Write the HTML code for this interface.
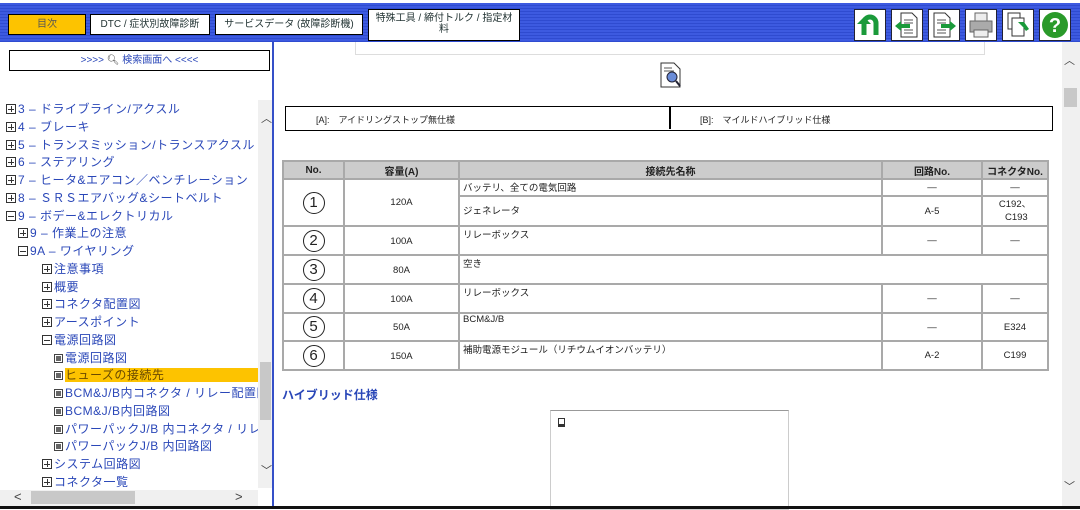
<!DOCTYPE html>
<html><head><meta charset="utf-8"><style>
*{margin:0;padding:0;box-sizing:border-box}
body{width:1080px;height:509px;overflow:hidden;background:#fff;font-family:"Liberation Sans","Noto Sans CJK JP",sans-serif;position:relative}
.abs{position:absolute}
#top{left:0;top:0;width:1080px;height:42px;background:repeating-linear-gradient(#3d5ae0 0 2px,#2f4bd0 2px 3px);border-top:3px solid #fff}
.btn{position:absolute;top:11px;height:21px;background:#fff;border:1px solid #000;font-size:10px;text-align:center;line-height:19px;color:#233}
.ib{position:absolute;top:6px;width:32px;height:32px;background:#fff;border:1px solid #223}
.treewrap{position:absolute;left:0;top:95px;width:258px;height:395px;overflow:hidden}
.tree div{position:absolute;font-size:12px;color:#2a47b8;white-space:nowrap;letter-spacing:0.5px}
.tree .b{display:inline-block;width:10px;height:10px;border:1px solid #333;margin-right:2px;vertical-align:-1px;position:relative}
.tree .p::before{content:"";position:absolute;left:1px;right:1px;top:3.5px;height:1px;background:#333}
.tree .p::after{content:"";position:absolute;top:1px;bottom:1px;left:3.5px;width:1px;background:#333}
.tree .m::before{content:"";position:absolute;left:1px;right:1px;top:3.5px;height:1px;background:#333}
.tree .d{display:inline-block;width:9px;height:9px;border:1px solid #444;background:#fff;margin-right:2px;vertical-align:-1px;position:relative}
.tree .d::before{content:"";position:absolute;left:1px;top:1px;width:5px;height:5px;background:#666}
table{border-collapse:collapse;position:absolute;left:282px;top:160px;width:767px;font-size:9.5px;color:#222}
td,th{border:2px solid #a9a9a9;text-align:center}
th{background:#ccc;height:18px;font-size:10px}
td.l{text-align:left;vertical-align:top;padding-left:3px}
td.v{padding-top:1px}
.c{display:inline-block;width:22px;height:22px;border:1.5px solid #222;border-radius:50%;font-size:15px;line-height:19px;text-align:center}
</style></head><body>
<div id="top" class="abs">
<div class="btn" style="left:8px;width:78px;background:#fdc300;color:#555">目次</div>
<div class="btn" style="left:90px;width:120px">DTC / 症状別故障診断</div>
<div class="btn" style="left:215px;width:148px">サービスデータ (故障診断機)</div>
<div class="btn" style="left:368px;width:152px;top:6px;height:32px;line-height:11px;padding-top:3px">特殊工具 / 締付トルク / 指定材<br>料</div>
<div class="ib" style="left:854px"><svg width="30" height="30"><path d="M9 25V13a6 6 0 0 1 12 0v12" fill="none" stroke="#1a9a3a" stroke-width="5"/><path d="M2 14l7-7 7 7z" fill="#1a9a3a"/></svg></div>
<div class="ib" style="left:891px"><svg width="30" height="30"><path d="M9 3h11l5 5v19H9z" fill="#fff" stroke="#333"/><path d="M12 10h9M12 13h9M12 20h9M12 23h9" stroke="#555"/><path d="M3 16l6-5v3h9v4H9v3z" fill="#1a9a3a"/></svg></div>
<div class="ib" style="left:928px"><svg width="30" height="30"><path d="M5 3h11l5 5v19H5z" fill="#fff" stroke="#333"/><path d="M8 10h9M8 13h9M8 20h9M8 23h9" stroke="#555"/><path d="M27 16l-6-5v3h-9v4h9v3z" fill="#1a9a3a"/></svg></div>
<div class="ib" style="left:965px"><svg width="30" height="30"><rect x="9" y="3" width="12" height="9" fill="#eee" stroke="#666"/><rect x="4" y="11" width="22" height="11" fill="#aaa" stroke="#666"/><rect x="8" y="20" width="14" height="7" fill="#eee" stroke="#666"/></svg></div>
<div class="ib" style="left:1002px"><svg width="30" height="30"><rect x="5" y="3" width="12" height="16" fill="#fff" stroke="#333"/><rect x="9" y="8" width="12" height="18" fill="#fff" stroke="#333"/><path d="M15 12l6 0 5 7-3 2-3-4z" fill="#1a9a3a"/></svg></div>
<div class="ib" style="left:1039px"><svg width="30" height="30"><circle cx="15" cy="15" r="13" fill="#2a9a2a"/><text x="15" y="22" text-anchor="middle" font-size="20" font-weight="bold" fill="#fff" font-family="Liberation Sans">?</text></svg></div>
</div>
<div class="abs" style="left:272px;top:42px;width:4px;height:464px;background:#fff;border-left:2px solid #3550c8"></div>
<div class="abs" style="left:9px;top:50px;width:261px;height:21px;border:1px solid #000;font-size:10px;text-align:center;line-height:19px;color:#2a47b8">&gt;&gt;&gt;&gt; <span style="color:#333">🔍︎</span> 検索画面へ &lt;&lt;&lt;&lt;</div>
<div class="treewrap"><div class="tree">
<div style="left:6px;top:5px"><span class="b p"></span>3 – ドライブライン/アクスル</div>
<div style="left:6px;top:23px"><span class="b p"></span>4 – ブレーキ</div>
<div style="left:6px;top:41px"><span class="b p"></span>5 – トランスミッション/トランスアクスル</div>
<div style="left:6px;top:58px"><span class="b p"></span>6 – ステアリング</div>
<div style="left:6px;top:76px"><span class="b p"></span>7 – ヒータ&amp;エアコン／ベンチレーション</div>
<div style="left:6px;top:94px"><span class="b p"></span>8 – ＳＲＳエアバッグ&amp;シートベルト</div>
<div style="left:6px;top:112px"><span class="b m"></span>9 – ボデー&amp;エレクトリカル</div>
<div style="left:18px;top:129px"><span class="b p"></span>9 – 作業上の注意</div>
<div style="left:18px;top:147px"><span class="b m"></span>9A – ワイヤリング</div>
<div style="left:42px;top:165px"><span class="b p"></span>注意事項</div>
<div style="left:42px;top:183px"><span class="b p"></span>概要</div>
<div style="left:42px;top:200px"><span class="b p"></span>コネクタ配置図</div>
<div style="left:42px;top:218px"><span class="b p"></span>アースポイント</div>
<div style="left:42px;top:236px"><span class="b m"></span>電源回路図</div>
<div style="left:54px;top:254px"><span class="d"></span>電源回路図</div>
<div style="left:54px;top:271px"><span class="d"></span><span style="background:#fdc300;color:#6a4a00;padding:0 100px 0 0">ヒューズの接続先</span></div>
<div style="left:54px;top:289px"><span class="d"></span>BCM&amp;J/B内コネクタ / リレー配置図</div>
<div style="left:54px;top:307px"><span class="d"></span>BCM&amp;J/B内回路図</div>
<div style="left:54px;top:325px"><span class="d"></span>パワーパックJ/B 内コネクタ / リレー</div>
<div style="left:54px;top:342px"><span class="d"></span>パワーパックJ/B 内回路図</div>
<div style="left:42px;top:360px"><span class="b p"></span>システム回路図</div>
<div style="left:42px;top:378px"><span class="b p"></span>コネクタ一覧</div>
</div></div>
<div class="abs" style="left:258px;top:100px;width:14px;height:388px;background:#f0f0f0"></div>
<div class="abs" style="left:260px;top:362px;width:11px;height:58px;background:#c8c8c8"></div>
<div class="abs" style="left:261px;top:110px;font-size:11px;color:#444">︿</div>
<div class="abs" style="left:261px;top:462px;font-size:11px;color:#444">﹀</div>
<div class="abs" style="left:0;top:490px;width:258px;height:16px;background:#f0f0f0"></div>
<div class="abs" style="left:31px;top:491px;width:104px;height:13px;background:#c8c8c8"></div>
<div class="abs" style="left:14px;top:489px;font-size:13px;color:#444">&lt;</div>
<div class="abs" style="left:235px;top:489px;font-size:13px;color:#444">&gt;</div>
<!-- right -->
<div class="abs" style="left:355px;top:42px;width:630px;height:13px;border:1px solid #ddd;border-top:0"></div>
<div class="abs" style="left:660px;top:62px"><svg width="22" height="26"><path d="M1 1h13l6 6v18H1z" fill="#fff" stroke="#333"/><path d="M4 6h8M4 9h10" stroke="#555"/><circle cx="12" cy="15" r="5" fill="#6a8cd8" stroke="#223"/><path d="M16 19l4 5" stroke="#223" stroke-width="2"/></svg></div>
<div class="abs" style="left:285px;top:106px;width:768px;height:25px;border:1.5px solid #000;font-size:9px;color:#222">
<div class="abs" style="left:383px;top:0;width:1.5px;height:22px;background:#000"></div>
<span class="abs" style="left:30px;top:6px">[A]:　アイドリングストップ無仕様</span>
<span class="abs" style="left:414px;top:6px">[B]:　マイルドハイブリッド仕様</span></div>
<table>
<tr><th style="width:61px">No.</th><th style="width:115px">容量(A)</th><th style="width:423px">接続先名称</th><th style="width:100px">回路No.</th><th>コネクタNo.</th></tr>
<tr style="height:17px"><td rowspan="2"><span class="c">1</span></td><td rowspan="2">120A</td><td class="l">バッテリ、全ての電気回路</td><td>—</td><td>—</td></tr>
<tr style="height:30px"><td class="l" style="padding-top:6px">ジェネレータ</td><td>A-5</td><td style="line-height:13px">C192、<br>&nbsp;C193</td></tr>
<tr style="height:29px"><td><span class="c">2</span></td><td class="v">100A</td><td class="l">リレーボックス</td><td>—</td><td>—</td></tr>
<tr style="height:29px"><td><span class="c">3</span></td><td class="v">80A</td><td class="l" colspan="3">空き</td></tr>
<tr style="height:29px"><td><span class="c">4</span></td><td class="v">100A</td><td class="l">リレーボックス</td><td>—</td><td>—</td></tr>
<tr style="height:28px"><td><span class="c">5</span></td><td class="v">50A</td><td class="l">BCM&amp;J/B</td><td>—</td><td>E324</td></tr>
<tr style="height:29px"><td><span class="c">6</span></td><td class="v">150A</td><td class="l">補助電源モジュール（リチウムイオンバッテリ）</td><td>A-2</td><td>C199</td></tr>
</table>
<div class="abs" style="left:282px;top:386px;font-size:12px;font-weight:bold;color:#2a47b8">ハイブリッド仕様</div>
<div class="abs" style="left:550px;top:410px;width:239px;height:100px;border:1px solid #ccc;border-top-color:#999"></div>
<div class="abs" style="left:558px;top:418px;width:7px;height:9px;border:1.5px solid #333;border-bottom-width:3px"></div>
<div class="abs" style="left:1062px;top:42px;width:18px;height:464px;background:#f0f0f0"></div>
<div class="abs" style="left:1064px;top:88px;width:13px;height:19px;background:#c8c8c8"></div>
<div class="abs" style="left:1064px;top:52px;font-size:11px;color:#444">︿</div>
<div class="abs" style="left:1064px;top:478px;font-size:11px;color:#444">﹀</div>
<div class="abs" style="left:0;top:506px;width:1080px;height:3px;background:#111"></div>
</body></html>
